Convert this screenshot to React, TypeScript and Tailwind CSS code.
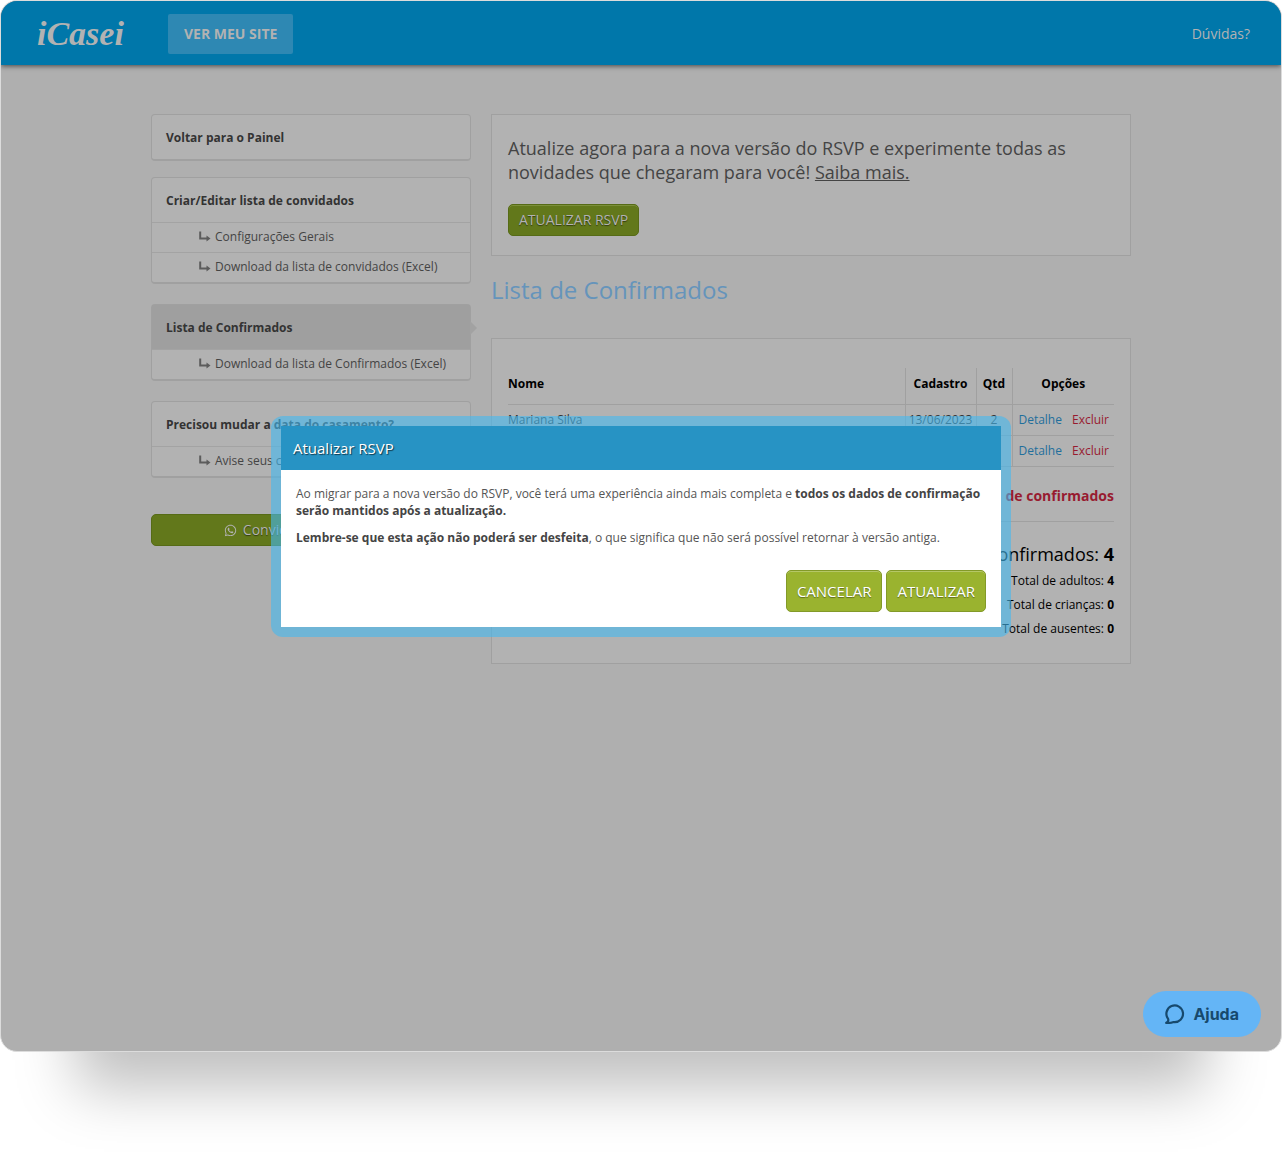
import React from 'react';
import { FaWhatsapp } from 'react-icons/fa';

interface IMenuCard {
    title: string;
    active?: boolean;
    items?: string[];
}

interface IGuest {
    name: string;
    date: string;
    amount: number;
}

const guests: IGuest[] = [
    { name: 'Mariana Silva', date: '13/06/2023', amount: 2 },
    { name: 'Pedro Souza', date: '13/06/2023', amount: 2 },
];

const totals = [
    { label: 'Total de adultos:', value: 4 },
    { label: 'Total de crianças:', value: 0 },
    { label: 'Total de ausentes:', value: 0 },
];

const ArrowIcon = () => (
    <svg width="12" height="12" viewBox="0 0 12 12" fill="none" aria-hidden="true">
        <path d="M1.2 0.5V7.5H8" stroke="#5c5c5c" strokeWidth="2" />
        <path d="M7.5 4.5L11.5 7.5L7.5 10.5Z" fill="#5c5c5c" />
    </svg>
);

const ChatIcon = () => (
    <svg width="20" height="20" viewBox="0 0 20 20" fill="none" aria-hidden="true">
        <path
            d="M1.2 18.8C2.9 18.2 3.7 16.8 3.1 14.8A8.3 8.3 0 1 1 8.6 18C6 18.9 4 19.2 1.2 18.8Z"
            stroke="#17496d"
            strokeWidth="2.2"
            strokeLinejoin="round"
        />
    </svg>
);

const MenuCard = ({ title, active, items = [] }: IMenuCard) => {
    return (
        <div className="relative rounded border border-b-2 border-[#a0a0a0] bg-[#b2b2b2]">
            <a
                href="#"
                className={`flex h-11 items-center px-3.5 pt-0.5 font-bold text-[#333] ${active ? 'bg-[#9f9f9f]' : ''}`}
            >
                {title}
            </a>
            {active && (
                <span className="absolute top-4 -right-[7px] h-3.5 w-[7px] bg-[#a2a2a2] [clip-path:polygon(0_0,100%_50%,0_100%)]" />
            )}
            {items.map((item) => (
                <a
                    key={item}
                    href="#"
                    className="flex h-[30px] items-center gap-1 border-t border-[#a3a3a3] pb-0.5 pl-[47px] text-[#444]"
                >
                    <ArrowIcon />
                    {item}
                </a>
            ))}
        </div>
    );
};

const Header = () => {
    return (
        <header className="flex h-16 items-center bg-[#0077aa] pt-0.5 pr-[31px] pl-9 text-[#b2b2b2] shadow-[0_1px_5px_rgba(0,0,0,0.6)]">
            <a href="#" className="w-[131px] font-['Liberation_Serif',serif] text-[34px] leading-none font-bold italic">
                iCasei
            </a>
            <a href="#" className="flex h-10 items-center rounded-xs bg-[#2e88b3] px-4 text-sm font-bold">
                VER MEU SITE
            </a>
            <a href="#" className="ml-auto text-sm">
                Dúvidas?
            </a>
        </header>
    );
};

const Sidebar = () => {
    return (
        <aside className="w-80 shrink-0">
            <nav className="flex flex-col gap-5">
                <div className="-mb-1">
                    <MenuCard title="Voltar para o Painel" />
                </div>
                <MenuCard
                    title="Criar/Editar lista de convidados"
                    items={['Configurações Gerais', 'Download da lista de convidados (Excel)']}
                />
                <MenuCard
                    title="Lista de Confirmados"
                    active
                    items={['Download da lista de Confirmados (Excel)']}
                />
                <MenuCard title="Precisou mudar a data do casamento?" items={['Avise seus convidados']} />
            </nav>
            <button className="mt-9 flex h-8 w-full items-center justify-center gap-1.5 rounded-[5px] border border-[#566b16] bg-[#62781b] text-sm text-[#b2b2b2] text-shadow-[0_1px_1px_rgba(0,0,0,0.5)]">
                <FaWhatsapp size={13} />
                Convidar por WhatsApp
            </button>
        </aside>
    );
};

const GuestTable = () => {
    return (
        <table className="w-full border-collapse">
            <thead>
                <tr className="h-9 border-b border-[#a0a0a0] text-black">
                    <th className="pb-1 text-left">Nome</th>
                    <th className="w-[71px] border-l border-[#a0a0a0] pb-1">Cadastro</th>
                    <th className="w-9 border-l border-[#a0a0a0] pb-1">Qtd</th>
                    <th className="w-[102px] border-l border-[#a0a0a0] pb-1">Opções</th>
                </tr>
            </thead>
            <tbody>
                {guests.map((guest) => (
                    <tr key={guest.name} className="h-[31px] border-b border-[#a0a0a0] text-[#333]">
                        <td>{guest.name}</td>
                        <td className="border-l border-[#a0a0a0] text-center">{guest.date}</td>
                        <td className="border-l border-[#a0a0a0] text-center">{guest.amount}</td>
                        <td className="border-l border-[#a0a0a0] pr-[5px]">
                            <div className="flex justify-end gap-2.5">
                                <a href="#" className="text-[#1f6f9c]">
                                    Detalhe
                                </a>
                                <a href="#" className="text-[#981b30]">
                                    Excluir
                                </a>
                            </div>
                        </td>
                    </tr>
                ))}
            </tbody>
        </table>
    );
};

const MainContent = () => {
    return (
        <main className="min-w-0 flex-1">
            <section className="border border-[#a0a0a0] bg-[#b2b2b2] px-4 pt-[21px] pb-[19px]">
                <p className="text-lg leading-6 text-[#444]">
                    Atualize agora para a nova versão do RSVP e experimente todas as novidades que chegaram para
                    você!{' '}
                    <a href="#" className="underline">
                        Saiba mais.
                    </a>
                </p>
                <button className="mt-5 h-8 rounded-[5px] border border-[#566b16] bg-[#62781b] px-2.5 text-sm text-[#b2b2b2] shadow-[inset_0_1px_0_#7b8f3a] text-shadow-[0_1px_1px_rgba(0,0,0,0.5)]">
                    ATUALIZAR RSVP
                </button>
            </section>
            <h1 className="mt-4 text-2xl leading-9 text-[#6594bb]">Lista de Confirmados</h1>
            <section className="mt-[30px] border border-[#a0a0a0] bg-[#b2b2b2] px-4 pt-[29px] pb-[22px] text-black">
                <GuestTable />
                <div className="border-b border-[#a0a0a0] pt-[17px] pb-[13px] text-right text-sm leading-6">
                    <a href="#" className="font-bold text-[#981b30]">
                        Excluir lista de confirmados
                    </a>
                </div>
                <div className="pt-5 text-right">
                    <p className="mb-[3px] text-lg leading-6">
                        Total de confirmados: <b>4</b>
                    </p>
                    {totals.map((total) => (
                        <p key={total.label} className="leading-6">
                            {total.label} <b>{total.value}</b>
                        </p>
                    ))}
                </div>
            </section>
        </main>
    );
};

const UpdatePopup = () => {
    return (
        <div className="absolute inset-0 flex items-center justify-center pt-px">
            <div
                role="dialog"
                aria-labelledby="popup-title"
                className="w-[740px] rounded-xl bg-[#44b9f0]/60 p-2.5"
            >
                <div className="bg-white">
                    <h2
                        id="popup-title"
                        className="flex h-11 items-center bg-[#2793c4] px-3 text-[15px] text-white text-shadow-[1px_1px_1px_rgba(0,0,0,0.6)]"
                    >
                        Atualizar RSVP
                    </h2>
                    <div className="p-[15px] text-[#555]">
                        <p className="leading-[17px]">
                            Ao migrar para a nova versão do RSVP, você terá uma experiência ainda mais completa e{' '}
                            <b className="text-[#444]">
                                todos os dados de confirmação serão mantidos após a atualização.
                            </b>
                        </p>
                        <p className="mt-2.5 leading-[17px]">
                            <b className="text-[#444]">Lembre-se que esta ação não poderá ser desfeita</b>, o que
                            significa que não será possível retornar à versão antiga.
                        </p>
                        <div className="mt-6 flex justify-end gap-1">
                            <button className="h-[42px] rounded-[5px] border border-[#839a28] bg-[#9ab32f] px-2.5 text-[15px] text-white shadow-[inset_0_1px_0_#b5c766] text-shadow-[0_1px_1px_rgba(0,0,0,0.4)]">
                                CANCELAR
                            </button>
                            <button className="h-[42px] rounded-[5px] border border-[#839a28] bg-[#9ab32f] px-2.5 text-[15px] text-white shadow-[inset_0_1px_0_#b5c766] text-shadow-[0_1px_1px_rgba(0,0,0,0.4)]">
                                ATUALIZAR
                            </button>
                        </div>
                    </div>
                </div>
            </div>
        </div>
    );
};

const App = () => {
    return (
        <div className="flex min-h-screen flex-col overflow-hidden bg-white pb-[101px] font-['Open_Sans',sans-serif] text-xs">
            <div className="relative flex-1 rounded-[17px] border border-[#dcdcdc] bg-[#afafaf] shadow-[0_112px_56px_-76px_rgba(0,0,0,0.25)]">
                <div className="h-full overflow-hidden rounded-2xl">
                    <Header />
                    <div className="mx-auto flex max-w-[980px] gap-5 pt-[49px] pb-24">
                        <Sidebar />
                        <MainContent />
                    </div>
                </div>
                <UpdatePopup />
                <button className="absolute right-5 bottom-3.5 flex h-[46px] items-center gap-2 rounded-full bg-[#64b5f6] px-[22px] font-['Inter',sans-serif] text-base font-bold text-[#17496d]">
                    <ChatIcon />
                    Ajuda
                </button>
            </div>
        </div>
    );
};

export default App;
